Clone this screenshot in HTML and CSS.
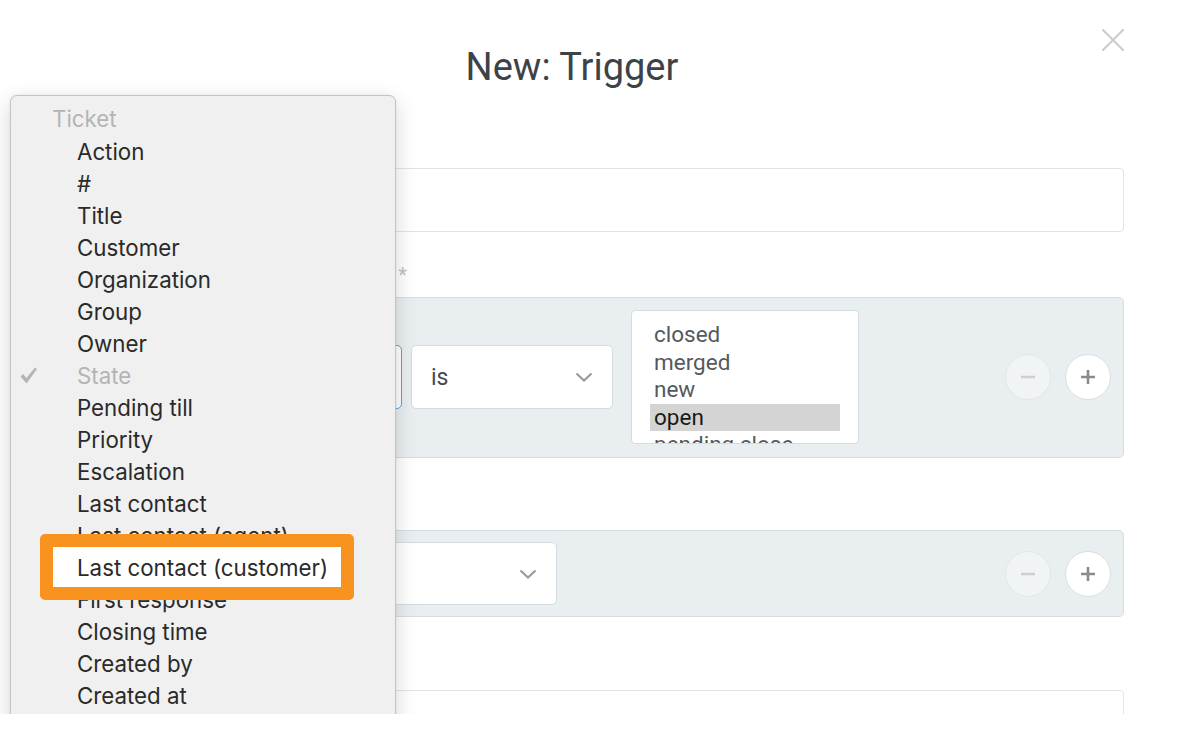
FILE: index.html
```html
<!DOCTYPE html>
<html lang="en">
<head>
<meta charset="utf-8">
<title>New: Trigger</title>
<link rel="stylesheet" href="styles.css">
</head>
<body>
<div class="screen">
  <div class="modal">
    <header class="modal-head">
      <span class="head-spacer"></span>
      <h1 class="title">New: Trigger</h1>
      <button class="close" type="button" aria-label="Close">
        <svg width="22" height="22" viewBox="0 0 22 22"><path d="M1 1L21 21M21 1L1 21" stroke="#cbcbcb" stroke-width="2" fill="none" stroke-linecap="round"/></svg>
      </button>
    </header>

    <form class="form">
      <div class="group group-name">
        <label class="label">Name <span class="req">*</span></label>
        <div class="input"></div>
      </div>

      <div class="group group-cond">
        <label class="label">Conditions for affected objects <span class="req">*</span></label>
        <div class="panel panel-cond">
          <div class="controls">
            <div class="select select-attr is-focus"><span class="select-text">State</span></div>
            <div class="select select-op">
              <span class="select-text">is</span>
              <svg class="chev" width="18" height="10" viewBox="0 0 18 10"><path d="M1.5 1.5L9 8.5L16.5 1.5" stroke="#9a9a9a" stroke-width="2.2" fill="none"/></svg>
            </div>
            <div class="listbox">
              <div class="opt">closed</div>
              <div class="opt">merged</div>
              <div class="opt">new</div>
              <div class="opt opt-selected">open</div>
              <div class="opt">pending close</div>
              <div class="opt">pending reminder</div>
            </div>
          </div>
          <div class="buttons">
            <span class="circle circle-minus"><svg width="16" height="16" viewBox="0 0 16 16"><path d="M1 8H15" stroke="#cfcfcf" stroke-width="2.6"/></svg></span>
            <span class="circle circle-plus"><svg width="16" height="16" viewBox="0 0 16 16"><path d="M1 8H15M8 1V15" stroke="#8a8a8a" stroke-width="2.6"/></svg></span>
          </div>
        </div>
      </div>

      <div class="group group-exec">
        <label class="label">Execute changes on objects <span class="req">*</span></label>
        <div class="panel panel-exec">
          <div class="controls">
            <div class="select select-wide">
              <span class="select-text"></span>
              <svg class="chev" width="18" height="10" viewBox="0 0 18 10"><path d="M1.5 1.5L9 8.5L16.5 1.5" stroke="#9a9a9a" stroke-width="2.2" fill="none"/></svg>
            </div>
          </div>
          <div class="buttons">
            <span class="circle circle-minus"><svg width="16" height="16" viewBox="0 0 16 16"><path d="M1 8H15" stroke="#cfcfcf" stroke-width="2.6"/></svg></span>
            <span class="circle circle-plus"><svg width="16" height="16" viewBox="0 0 16 16"><path d="M1 8H15M8 1V15" stroke="#8a8a8a" stroke-width="2.6"/></svg></span>
          </div>
        </div>
      </div>

      <div class="group group-note">
        <label class="label">Note</label>
        <div class="input"></div>
      </div>
    </form>
  </div>

  <ul class="menu">
    <li class="menu-head">Ticket</li>
    <li class="item"><span class="mark"></span><span class="txt">Action</span></li>
    <li class="item"><span class="mark"></span><span class="txt">#</span></li>
    <li class="item"><span class="mark"></span><span class="txt">Title</span></li>
    <li class="item"><span class="mark"></span><span class="txt">Customer</span></li>
    <li class="item"><span class="mark"></span><span class="txt">Organization</span></li>
    <li class="item"><span class="mark"></span><span class="txt">Group</span></li>
    <li class="item"><span class="mark"></span><span class="txt">Owner</span></li>
    <li class="item item-checked"><span class="mark"><svg width="19" height="19" viewBox="0 0 19 19"><path d="M1.5 10.5L4 8L7.5 12L16 1.5L18 3L7.5 17.5Z" fill="#b4b4b4"/></svg></span><span class="txt">State</span></li>
    <li class="item"><span class="mark"></span><span class="txt">Pending till</span></li>
    <li class="item"><span class="mark"></span><span class="txt">Priority</span></li>
    <li class="item"><span class="mark"></span><span class="txt">Escalation</span></li>
    <li class="item"><span class="mark"></span><span class="txt">Last contact</span></li>
    <li class="item"><span class="mark"></span><span class="txt">Last contact (agent)</span></li>
    <li class="item item-highlight"><span class="mark"></span><span class="txt">Last contact (customer)</span></li>
    <li class="item"><span class="mark"></span><span class="txt">First response</span></li>
    <li class="item"><span class="mark"></span><span class="txt">Closing time</span></li>
    <li class="item"><span class="mark"></span><span class="txt">Created by</span></li>
    <li class="item"><span class="mark"></span><span class="txt">Created at</span></li>
  </ul>
</div>
</body>
</html>
```

FILE: styles.css
```css
*, *::before, *::after { box-sizing: border-box; }

html, body {
  margin: 0;
  padding: 0;
  background: #ffffff;
}

.screen {
  position: relative;
  width: 1200px;
  height: 714px;
  overflow: hidden;
  background: #ffffff;
  font-family: Roboto, "Liberation Sans", sans-serif;
}

.modal {
  width: 1124px;
  padding: 29px 0 0 20px;
}

.modal-head {
  display: grid;
  grid-template-columns: 1fr auto 1fr;
}

.title {
  margin: 15px 0 0;
  font-size: 38px;
  line-height: 46px;
  font-weight: 400;
  color: #3d4248;
}

.close {
  justify-self: end;
  align-self: start;
  width: 22px;
  height: 22px;
  padding: 0;
  border: 0;
  background: none;
  display: flex;
}

.form {
  margin-top: 42px;
}

.label {
  display: block;
  height: 24px;
  line-height: 24px;
  margin-bottom: 12px;
  font-size: 27px;
  color: #6f7b83;
  white-space: nowrap;
}

.req {
  color: #b9c2c8;
  font-size: 20px;
}

.group-name { margin-bottom: 29px; }
.group-cond { margin-bottom: 36px; }
.group-exec { margin-bottom: 37px; }

.input {
  height: 64px;
  border: 1px solid #e1e4e6;
  border-radius: 4px;
  background: #fff;
}

.panel {
  display: flex;
  align-items: center;
  justify-content: space-between;
  background: #e9eef1;
  border: 1px solid #d6dde2;
  border-radius: 5px;
  padding: 12px 12px 13px 12px;
}

.panel-exec {
  padding: 11px 12px 11px 12px;
}

.controls {
  display: flex;
  align-items: center;
}

.select {
  display: flex;
  align-items: center;
  justify-content: space-between;
  height: 64px;
  padding: 0 19px;
  background: #fff;
  border: 1px solid #d5dbdf;
  border-radius: 5px;
  font-size: 23px;
  color: #444a50;
}

.select-attr {
  width: 369px;
  border-color: #5aa3d9;
}

.select-op {
  width: 202px;
  margin-left: 9px;
}

.select-wide {
  width: 524px;
  height: 63px;
}

.chev { flex: none; }

.listbox {
  width: 228px;
  height: 134px;
  margin-left: 18px;
  padding: 10px 18px 0 18px;
  background: #fff;
  border: 1px solid #d5dbdf;
  border-radius: 4px;
  overflow: hidden;
}

.opt {
  height: 27.5px;
  line-height: 27.5px;
  padding-left: 4px;
  font-size: 22.5px;
  color: #55595d;
  white-space: nowrap;
}

.opt-selected {
  background: #d4d4d4;
  color: #1a1a1a;
}

.buttons {
  display: flex;
  gap: 14px;
}

.circle {
  width: 46px;
  height: 46px;
  border-radius: 50%;
  display: flex;
  align-items: center;
  justify-content: center;
}

.circle-minus {
  background: #f1f4f6;
  border: 1px solid #e2e6e9;
}

.circle-plus {
  background: #ffffff;
  border: 1px solid #d9dee2;
}

/* native popup menu */
.menu {
  position: absolute;
  left: 10px;
  top: 95px;
  width: 386px;
  height: 700px;
  margin: 0;
  padding: 7px 0 0 0;
  list-style: none;
  background: #f0f0f0;
  border: 1px solid #c4c4c4;
  border-radius: 7px;
  box-shadow: 0 6px 22px rgba(0, 0, 0, 0.16), 0 0 2px rgba(0, 0, 0, 0.08);
  font-family: Inter, "Liberation Sans", sans-serif;
  font-size: 22.3px;
  z-index: 10;
}

.menu-head {
  height: 32px;
  line-height: 32px;
  padding-left: 41px;
  color: #b4b4b4;
}

.item {
  display: flex;
  align-items: center;
  height: 32px;
  padding-left: 8px;
  color: #2a2a2a;
  white-space: nowrap;
}

.mark {
  width: 58px;
  flex: none;
  display: flex;
  align-items: center;
}

.item-checked { color: #b4b4b4; }

.item-highlight { position: relative; }

.item-highlight::before {
  content: "";
  position: absolute;
  left: 29px;
  top: -17px;
  width: 314px;
  height: 66px;
  border: 13px solid #f8931f;
  border-radius: 5px;
  background: #ffffff;
  z-index: 1;
}

.item-highlight .txt {
  position: relative;
  z-index: 2;
}
```
